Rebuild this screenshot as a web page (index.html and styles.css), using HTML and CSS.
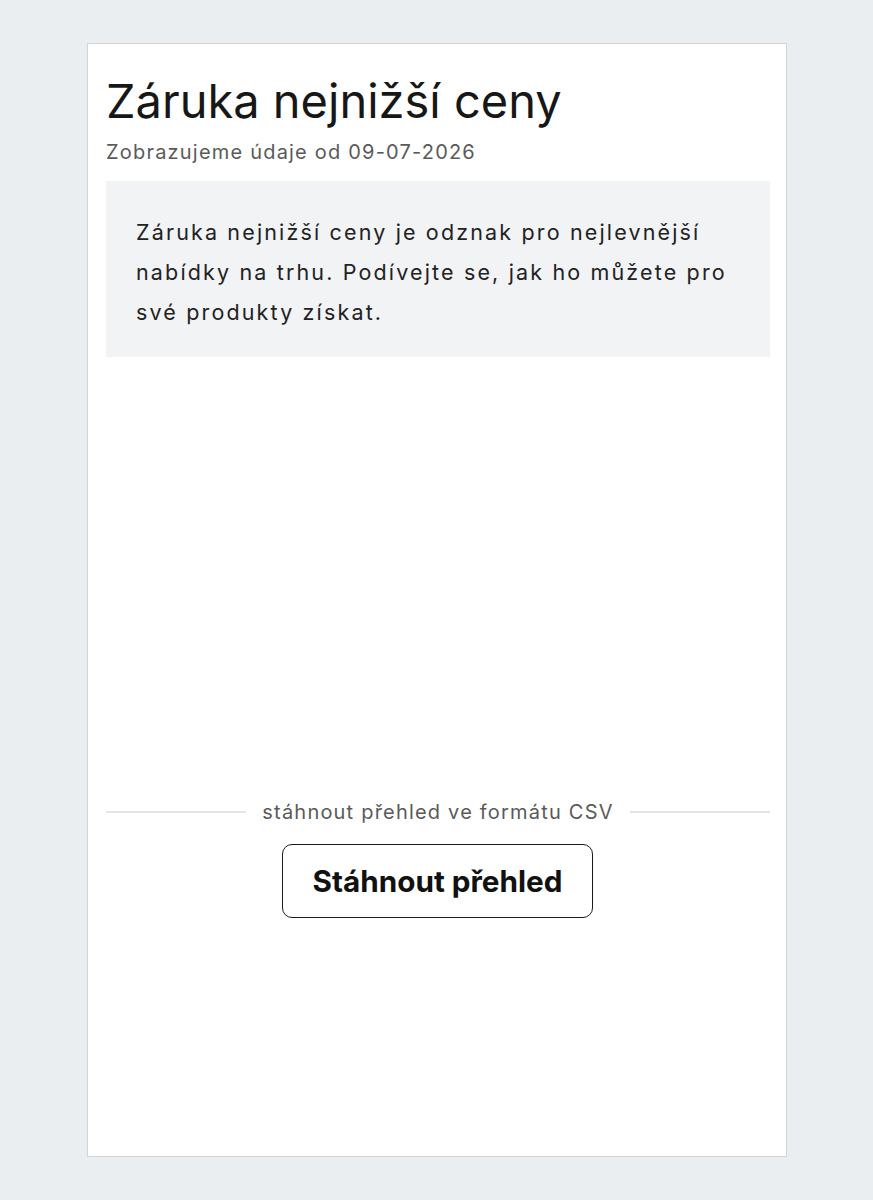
FILE: index.html
```html
<!DOCTYPE html>
<html lang="cs">
<head>
<meta charset="utf-8">
<link rel="stylesheet" href="styles.css">
</head>
<body>
<div class="card">
  <h1 class="title">Záruka nejnižší ceny</h1>
  <p class="subtitle">Zobrazujeme údaje od 09-07-2026</p>
  <div class="info">
    <p>Záruka nejnižší ceny je odznak pro nejlevnější nabídky na trhu. Podívejte se, jak ho můžete pro své produkty získat.</p>
  </div>
  <div class="spacer"></div>
  <div class="divider">
    <span class="line"></span>
    <span class="divider-text">stáhnout přehled ve formátu CSV</span>
    <span class="line"></span>
  </div>
  <div class="actions">
    <button class="btn">Stáhnout přehled</button>
  </div>
</div>
</body>
</html>
```
FILE: styles.css
```css
html, body {
  margin: 0;
  padding: 0;
  background: #eaeef1;
  font-family: Inter, "Noto Sans", sans-serif;
}
body {
  padding-top: 43px;
  padding-left: 87px;
}
.card {
  box-sizing: border-box;
  width: 700px;
  height: 1114px;
  background: #fff;
  border: 1px solid #d4d4d4;
  padding: 0 16px 0 18px;
  display: flex;
  flex-direction: column;
}
.title {
  margin: 28px 0 0 0;
  font-size: 47px;
  font-weight: 400;
  line-height: 58px;
  color: #171717;
}
.subtitle {
  margin: 10px 0 0 0;
  font-size: 20px;
  line-height: 24px;
  letter-spacing: 1.2px;
  color: #5a5a5a;
}
.info {
  margin-top: 17px;
  background: #f2f3f5;
  padding: 31px 30px 25px 30px;
}
.info p {
  margin: 0;
  font-size: 21.5px;
  line-height: 40px;
  letter-spacing: 2.15px;
  color: #222;
}
.spacer {
  height: 443px;
}
.divider {
  display: flex;
  align-items: center;
  gap: 16px;
}
.line {
  flex: 1;
  height: 2px;
  background: #e4e4e4;
}
.divider-text {
  font-size: 20px;
  line-height: 24px;
  letter-spacing: 1.2px;
  color: #5a5a5a;
}
.actions {
  display: flex;
  justify-content: center;
  margin-top: 20px;
}
.btn {
  box-sizing: border-box;
  width: 311px;
  height: 74px;
  margin-right: 1px;
  background: #fff;
  border: 1.5px solid #1a1a1a;
  border-radius: 10px;
  font-family: Inter, "Noto Sans", sans-serif;
  font-size: 29.7px;
  font-weight: 700;
  color: #111;
  cursor: pointer;
}
```
